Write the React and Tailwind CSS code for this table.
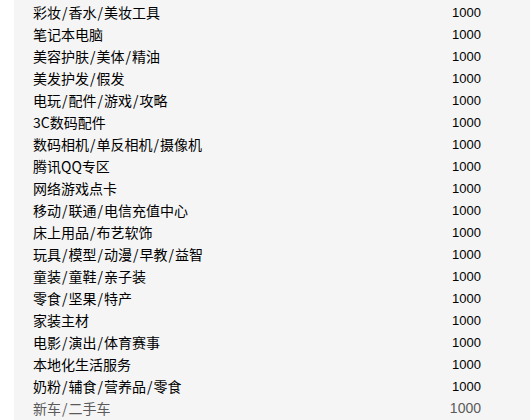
import React from "react";

const items = [
  "彩妆/香水/美妆工具",
  "笔记本电脑",
  "美容护肤/美体/精油",
  "美发护发/假发",
  "电玩/配件/游戏/攻略",
  "3C数码配件",
  "数码相机/单反相机/摄像机",
  "腾讯QQ专区",
  "网络游戏点卡",
  "移动/联通/电信充值中心",
  "床上用品/布艺软饰",
  "玩具/模型/动漫/早教/益智",
  "童装/童鞋/亲子装",
  "零食/坚果/特产",
  "家装主材",
  "电影/演出/体育赛事",
  "本地化生活服务",
  "奶粉/辅食/营养品/零食",
];

function Label({ text }) {
  const parts = text.split("/");
  return (
    <span className="font-['Noto_Sans_CJK_SC',sans-serif] leading-none">
      {parts.map((p, i) => (
        <React.Fragment key={i}>
          {i > 0 && <span className="px-[1px]">/</span>}
          {p}
        </React.Fragment>
      ))}
    </span>
  );
}

export default function App() {
  return (
    <div className="w-[530px] h-[420px] bg-white overflow-hidden">
      <div className="ml-[14px] h-full bg-[#f5f5f5] pt-[1px] text-[14px] text-black font-['Noto_Sans_CJK_SC',sans-serif]">
        {items.map((t) => (
          <div key={t} className="flex h-[22px] items-center justify-between pl-[19px] pr-[49px]">
            <Label text={t} />
            <span className="font-['Liberation_Sans',sans-serif] text-[13px] leading-none">1000</span>
          </div>
        ))}
        <div className="flex h-[22px] items-center justify-between pl-[19px] pr-[49px] text-[#5a5a5a]">
          <Label text="新车/二手车" />
          <span className="font-['Liberation_Sans',sans-serif] text-[14px] leading-none">1000</span>
        </div>
      </div>
    </div>
  );
}
